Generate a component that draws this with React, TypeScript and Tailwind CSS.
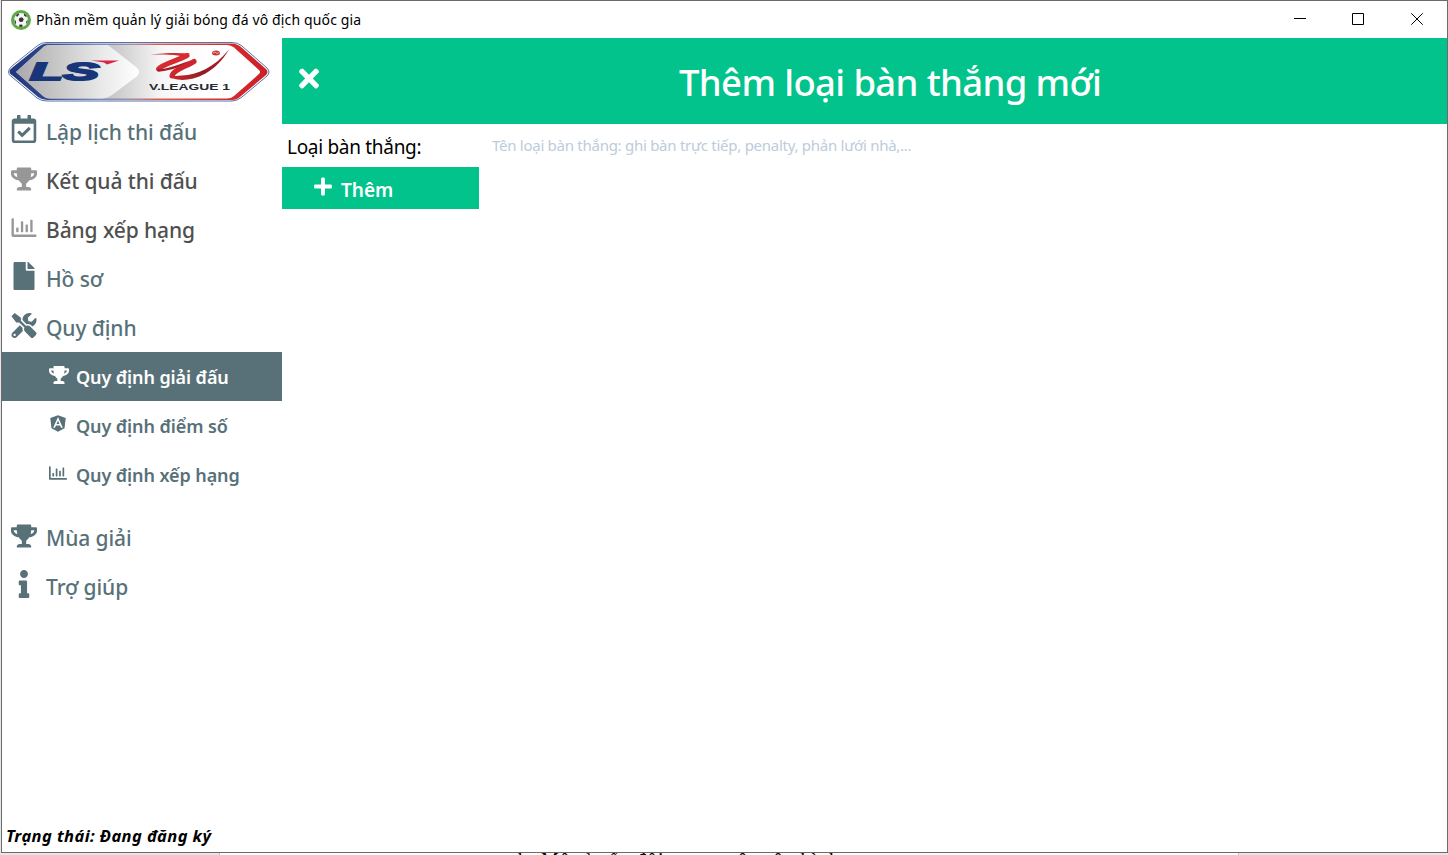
import type { ReactNode } from "react";
import {
  FaAngular,
  FaFile,
  FaInfo,
  FaPlus,
  FaRegCalendarCheck,
  FaRegChartBar,
  FaTimes,
  FaTools,
  FaTrophy,
} from "react-icons/fa";

function BallIcon() {
  return (
    <svg className="h-5 w-5 shrink-0" viewBox="0 0 20 20">
      <circle cx="10" cy="10" r="10" fill="#5faa46" />
      <circle cx="10" cy="10" r="7" fill="#f4f4f4" />
      <path d="M8.4 8l2.600-.8 1.800 2-1.200 2.500-2.600.3-1.300-2zM5 5.200l2.200-1.700 1.200.8L6 7zM13 3.600l2.600 2.200-.2 1.400-2.400-1.600zM3.200 9.500l1.500 1.300.4 2.800-1 .2zM16.900 9.700l-1.500 1.600-.2 2 .9.400zM8.200 14.800l2.700-.2 1 1.700-1.800.6-2-.5z" fill="#333" />
    </svg>
  );
}

function LeagueLogo() {
  return (
    <svg className="h-[62px] w-[264px]" viewBox="0 0 264 62">
      <defs>
        <linearGradient id="edge" x1="0" x2="1">
          <stop offset="0" stopColor="#20357c" />
          <stop offset="0.12" stopColor="#2c4588" />
          <stop offset="0.35" stopColor="#7891bd" />
          <stop offset="0.48" stopColor="#a48f9f" />
          <stop offset="0.58" stopColor="#e25a50" />
          <stop offset="0.85" stopColor="#d42b2b" />
          <stop offset="1" stopColor="#cc1f27" />
        </linearGradient>
        <linearGradient id="silver" x1="0" x2="1">
          <stop offset="0" stopColor="#a9a9ab" />
          <stop offset="0.7" stopColor="#e9e9e9" />
          <stop offset="1" stopColor="#ffffff" />
        </linearGradient>
        <linearGradient id="plate" x1="0" x2="1">
          <stop offset="0.38" stopColor="#c4c4c6" />
          <stop offset="0.6" stopColor="#f7f7f7" />
          <stop offset="0.8" stopColor="#ffffff" />
        </linearGradient>
        <linearGradient id="sweep" gradientUnits="userSpaceOnUse" x1="162" y1="36" x2="222" y2="9">
          <stop offset="0" stopColor="#d0262d" />
          <stop offset="0.5" stopColor="#8f1d24" />
          <stop offset="1" stopColor="#b3222a" />
        </linearGradient>
      </defs>
      <path d="M1.500 31Q1.500 28 5 25L30 5Q34 1.500 39 1.500H225Q231 1.500 235 5L260 27Q264 31 260 35L235 56Q230 60 225 60H40Q34 60 30 57L5 36Q1.500 34 1.500 31Z" fill="#fff" stroke="#5a72a8" strokeWidth="1" />
      <path d="M2.500 31Q2.500 28.500 6 26L31 6Q35 2.500 39 2.500H225Q230 2.500 234 6L259 28Q262 31 259 34L234 55Q230 59 225 59H40Q35 59 31 56L6 35Q2.500 33 2.500 31Z" fill="url(#edge)" />
      <path d="M9 31L37 5.500Q39 4 42 4H220Q224 4 227 6.500L252 29Q254 31 252 33L227 55Q224 57.500 220 57.500H43Q39 57.500 36 55Z" fill="url(#plate)" />
      <path d="M9 31L37 5.500Q39 4 42 4H101L129 26Q135 31 129 36L105 54Q100 57.500 94 57.500H43Q39 57.500 36 55Z" fill="url(#silver)" />
      <text x="23" y="39" textLength="69" lengthAdjust="spacingAndGlyphs" className="fill-[#183579] stroke-[#183579] stroke-[1.8px] font-['Liberation_Sans'] text-[24px] font-bold italic">LS</text>
      <path d="M84 19.500H112L100 23.500L97 21.500Z" fill="#dc2148" />
      <g fill="none" strokeLinecap="round">
        <path d="M180 14.500C170 20 156 23 151.500 28" stroke="#d82b30" strokeWidth="5" />
        <path d="M151 29C162 30.500 176 22 188 20" stroke="#a51f28" strokeWidth="2.600" />
        <path d="M187 20.500C178 26 166 29 165 35" stroke="#cf262d" strokeWidth="5" />
      </g>
      <path d="M143 13.500C156 12 170 11.500 183 12.500L178 16C170 13.500 154 13.500 143 13.500Z" fill="#d82b30" />
      <path d="M162.500 35C168 42 202 43 222 8.500C208 26 190 34 175 34.500C170 35 167 35 162.500 35Z" fill="url(#sweep)" />
      <ellipse cx="209" cy="12" rx="4" ry="2.500" fill="#c7353b" />
      <path d="M206 12L208 11L210 12.500L212 11.500" stroke="#fff" strokeWidth=".6" fill="none" />
      <text x="142" y="48.500" textLength="81" lengthAdjust="spacingAndGlyphs" className="fill-[#282a30] font-['Liberation_Sans'] text-[8.5px] font-bold">V.LEAGUE 1</text>
    </svg>
  );
}

type ItemProps = { icon: ReactNode; label: string; text: string };

function MenuItem({ icon, label, text }: ItemProps) {
  return (
    <li className="flex h-[49px] items-center pl-2">
      <span className="mb-[5px] flex w-[28px] shrink-0 justify-center">{icon}</span>
      <span className={`mt-px ml-2 whitespace-nowrap text-[21px] leading-[30px] font-medium tracking-[-0.1px] ${text}`}>{label}</span>
    </li>
  );
}

function SubItem({ icon, label, text }: ItemProps) {
  return (
    <li className={`flex h-[49px] items-center pl-[45px] ${text}`}>
      <span className="mb-[4px] flex w-6 shrink-0 justify-center">{icon}</span>
      <span className="ml-[5px] whitespace-nowrap text-[18px] leading-[26px] font-semibold tracking-[-0.1px]">{label}</span>
    </li>
  );
}

export default function App() {
  return (
    <div className="flex h-[855px] w-[1448px] flex-col overflow-hidden bg-[#e6e6e6] font-['Noto_Sans',sans-serif] text-black">
      <div className="ml-px flex h-[853px] w-[1447px] shrink-0 flex-col border border-[#6b6b6b] bg-white">
        <header className="flex h-[37px] shrink-0 items-center pl-[9px]">
          <BallIcon />
          <h1 className="ml-[5px] whitespace-nowrap text-[14px] leading-5 tracking-[0.14px]">Phần mềm quản lý giải bóng đá vô địch quốc gia</h1>
          <div className="mr-6 mb-[2px] ml-auto flex items-center">
            <svg className="mr-[46px] h-3 w-3" viewBox="0 0 12 12"><path d="M0 5.500H12" stroke="#000" /></svg>
            <svg className="mr-[47px] h-3 w-3" viewBox="0 0 12 12"><path d="M.5.5H11.500V11.500H.5Z" fill="none" stroke="#000" /></svg>
            <svg className="h-3 w-3" viewBox="0 0 12 12"><path d="M.3.3L11.700 11.700M11.700.3L.3 11.700" fill="none" stroke="#000" /></svg>
          </div>
        </header>
        <div className="flex min-h-0 flex-1">
          <aside className="flex w-[280px] shrink-0 flex-col">
            <div className="h-[69px] shrink-0 pt-[3px] pl-[5px]"><LeagueLogo /></div>
            <nav className="text-[#587179]">
              <ul>
                <MenuItem icon={<FaRegCalendarCheck className="h-7 w-[26px]" />} label="Lập lịch thi đấu" text="" />
                <MenuItem icon={<FaTrophy className="mt-px mr-px h-[26px] w-[26px] text-[#979797]" />} label="Kết quả thi đấu" text="text-[#505050]" />
                <MenuItem icon={<FaRegChartBar className="h-[25px] w-[26px] text-[#979797]" />} label="Bảng xếp hạng" text="text-[#505050]" />
                <MenuItem icon={<FaFile className="h-7 w-[22px]" />} label="Hồ sơ" text="" />
                <MenuItem icon={<FaTools className="h-[25px] w-[26px]" />} label="Quy định" text="" />
              </ul>
              <ul className="mb-[14px]">
                <SubItem icon={<FaTrophy className="h-5 w-5" />} label="Quy định giải đấu" text="bg-[#587179] text-white" />
                <SubItem icon={<FaAngular className="mr-[2px] h-[19px] w-[18px]" />} label="Quy định điểm số" text="" />
                <SubItem icon={<FaRegChartBar className="mr-[2px] h-[18px] w-[18px]" />} label="Quy định xếp hạng" text="" />
              </ul>
              <ul>
                <MenuItem icon={<FaTrophy className="mt-px mr-px h-[26px] w-[26px]" />} label="Mùa giải" text="" />
                <MenuItem icon={<FaInfo className="mr-px h-7 w-[12px]" />} label="Trợ giúp" text="" />
              </ul>
            </nav>
            <p className="mt-auto mb-1 pl-1 text-[16.5px] leading-6 font-bold tracking-[0.41px] whitespace-nowrap italic">Trạng thái: Đang đăng ký</p>
          </aside>
          <main className="min-w-0 flex-1">
            <div className="flex h-[86px] items-center bg-[#02c38b] pl-[17px] text-white">
              <FaTimes className="mb-[6px] h-[29px] w-5" />
              <h2 className="ml-[360px] pt-[2px] whitespace-nowrap text-[36.5px] leading-[52px] font-medium tracking-[-0.64px]">Thêm loại bàn thắng mới</h2>
            </div>
            <div className="flex h-[43px] items-center">
              <label className="w-[197px] shrink-0 pt-[3px] pl-[5px] text-[19px] leading-[26px] tracking-[-0.3px] whitespace-nowrap">Loại bàn thắng:</label>
              <span className="ml-[13px] pb-px text-[15px] leading-5 tracking-[-0.27px] whitespace-nowrap text-[#bcccdc]">Tên loại bàn thắng: ghi bàn trực tiếp, penalty, phản lưới nhà,...</span>
            </div>
            <button className="flex h-[42px] w-[197px] items-center bg-[#02c38b] pl-8 text-white">
              <FaPlus className="mb-1 h-[21px] w-[18px]" />
              <span className="ml-[9px] pt-1 text-[19px] leading-[26px] font-semibold">Thêm</span>
            </button>
          </main>
        </div>
      </div>
      <div className="flex h-[2px] shrink-0 overflow-hidden">
        <div className="w-[219px]" />
        <div className="flex w-[1020px] overflow-hidden border-x border-[#c4c4c4] bg-white pl-[298px]">
          <span className="-mt-[3px] whitespace-nowrap font-['Liberation_Serif'] text-[20px] leading-5 tracking-[1px]">b. Mô tả cấu đội trong trận sân hình</span>
        </div>
      </div>
    </div>
  );
}
